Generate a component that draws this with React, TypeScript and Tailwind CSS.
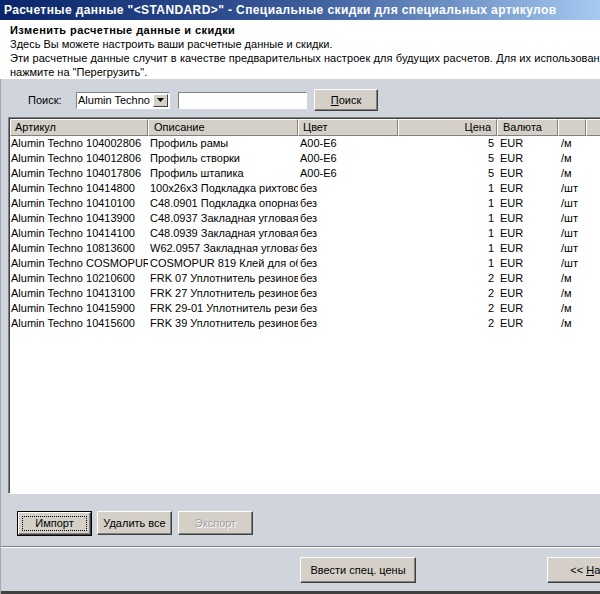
import React from 'react'

const rows = [
  ['Alumin Techno 104002806', 'Профиль рамы', 'A00-E6', '5', 'EUR', '/м'],
  ['Alumin Techno 104012806', 'Профиль створки', 'A00-E6', '5', 'EUR', '/м'],
  ['Alumin Techno 104017806', 'Профиль штапика', 'A00-E6', '5', 'EUR', '/м'],
  ['Alumin Techno 10414800', '100x26x3 Подкладка рихтовочная', 'без', '1', 'EUR', '/шт'],
  ['Alumin Techno 10410100', 'C48.0901 Подкладка опорная', 'без', '1', 'EUR', '/шт'],
  ['Alumin Techno 10413900', 'C48.0937 Закладная угловая', 'без', '1', 'EUR', '/шт'],
  ['Alumin Techno 10414100', 'C48.0939 Закладная угловая', 'без', '1', 'EUR', '/шт'],
  ['Alumin Techno 10813600', 'W62.0957 Закладная угловая', 'без', '1', 'EUR', '/шт'],
  ['Alumin Techno COSMOPUR 819', 'COSMOPUR 819 Клей для обжима', 'без', '1', 'EUR', '/шт'],
  ['Alumin Techno 10210600', 'FRK 07 Уплотнитель резиновый', 'без', '2', 'EUR', '/м'],
  ['Alumin Techno 10413100', 'FRK 27 Уплотнитель резиновый', 'без', '2', 'EUR', '/м'],
  ['Alumin Techno 10415900', 'FRK 29-01 Уплотнитель резиновый', 'без', '2', 'EUR', '/м'],
  ['Alumin Techno 10415600', 'FRK 39 Уплотнитель резиновый', 'без', '2', 'EUR', '/м'],
]

function Btn({
  children,
  className = '',
  focused = false,
  disabled = false,
}: {
  children: React.ReactNode
  className?: string
  focused?: boolean
  disabled?: boolean
}) {
  return (
    <div
      className={`shrink-0 bg-[#d4d0c8] ${
        focused ? 'border border-black' : ''
      } ${className}`}
    >
      <div className="w-full h-full border-t border-l border-white border-r border-b border-r-[#404040] border-b-[#404040] shadow-[inset_-1px_-1px_0_#808080] flex items-center justify-center">
        <div
          className={`flex items-center justify-center ${
            focused ? 'border border-dotted border-black w-[calc(100%-6px)] h-[calc(100%-6px)]' : ''
          } ${disabled ? 'text-[#a0a0a0] [text-shadow:1px_1px_0_#fff]' : 'text-black'}`}
        >
          {children}
        </div>
      </div>
    </div>
  )
}

const cols = [
  { w: 'w-[138px]', head: 'pl-[4px]', cell: 'pl-[1px]' },
  { w: 'w-[150px]', head: 'pl-[5px]', cell: 'pl-[2px]' },
  { w: 'w-[100px]', head: 'pl-[4px]', cell: 'pl-[2px]' },
  { w: 'w-[99px]', head: 'pr-[5px] justify-end', cell: 'pr-[3px] justify-end' },
  { w: 'w-[61px]', head: 'pl-[5px]', cell: 'pl-[3px]' },
  { w: 'w-[28px]', head: '', cell: 'pl-[3px]' },
  { w: 'w-[100px]', head: '', cell: '' },
]

const heads = ['Артикул', 'Описание', 'Цвет', 'Цена', 'Валюта', '', '']

export default function App() {
  return (
    <div className="w-[600px] h-[594px] overflow-hidden flex flex-col bg-[#d0d4dd] font-['Liberation_Sans',Arial,sans-serif] text-[11px] text-black">
      <div className="h-[20px] shrink-0 bg-gradient-to-r from-[#0a246a] via-[#3a5a9a] to-[#a6caf0] text-white font-bold text-[12px] tracking-[0.4px] leading-[20px] pl-[4px] whitespace-nowrap overflow-hidden">
        Расчетные данные "&lt;STANDARD&gt;" - Специальные скидки для специальных артикулов
      </div>

      <div className="h-[59px] shrink-0 bg-white pl-[10px] pt-[3px] leading-[14px] whitespace-nowrap overflow-hidden">
        <div className="font-bold tracking-[0.45px]">Изменить расчетные данные и скидки</div>
        <div>Здесь Вы можете настроить ваши расчетные данные и скидки.</div>
        <div className="tracking-[0.08px]">
          Эти расчетные данные случит в качестве предварительных настроек для будущих расчетов. Для их использования
        </div>
        <div>нажмите на "Перегрузить".</div>
      </div>

      <div className="flex-1 flex flex-col border-l border-[#a4a8b0] min-h-0">
        <div className="h-[22px] mt-[10px] flex items-center shrink-0">
          <div className="w-[48px] ml-[27px]">Поиск:</div>
          <div className="w-[94px] h-[17px] bg-white border-t border-l border-[#808080] border-r border-b border-r-white border-b-white flex items-center">
            <div className="flex-1 pl-[1px] whitespace-nowrap overflow-hidden">Alumin Techno</div>
            <div className="w-[15px] h-[13px] mr-[1px] bg-[#d4d0c8] border-t border-l border-white border-r border-b border-r-[#404040] border-b-[#404040] flex items-center justify-center">
              <svg width="7" height="4" viewBox="0 0 7 4">
                <path d="M0 0h7L3.5 4z" fill="#000" />
              </svg>
            </div>
          </div>
          <div className="w-[129px] h-[17px] ml-[8px] bg-white border-t border-l border-[#808080] border-r border-b border-r-white border-b-white" />
          <Btn className="w-[64px] h-[22px] ml-[7px]">
            <span>
              <span className="underline">П</span>оиск
            </span>
          </Btn>
        </div>

        <div className="ml-[7px] mt-[6px] h-[377px] shrink-0 border-t border-l border-[#808080] border-r-0 border-b border-b-white">
          <div className="h-full border-t border-l border-[#404040] bg-white overflow-hidden">
            <div className="flex h-[17px]">
              {heads.map((h, i) => (
                <div
                  key={i}
                  className={`${cols[i].w} shrink-0 h-full bg-[#d4d0c8] border-t border-l border-white border-r border-b border-r-[#808080] border-b-[#808080] flex items-center ${cols[i].head}`}
                >
                  {h}
                </div>
              ))}
            </div>
            {rows.map((r, ri) => (
              <div key={ri} className="flex h-[15px] leading-[15px]">
                {r.map((c, ci) => (
                  <div
                    key={ci}
                    className={`${cols[ci].w} shrink-0 flex whitespace-nowrap overflow-hidden ${cols[ci].cell}`}
                  >
                    {c}
                  </div>
                ))}
              </div>
            ))}
          </div>
        </div>

        <div className="flex mt-[17px] h-[25px] shrink-0">
          <Btn focused className="w-[75px] h-[25px] ml-[16px]">
            <span className="px-[10px]">Импорт</span>
          </Btn>
          <Btn className="w-[75px] h-[24px] ml-[5px]">Удалить все</Btn>
          <Btn disabled className="w-[75px] h-[24px] ml-[6px]">
            Экспорт
          </Btn>
        </div>

        <div className="mt-[10px] h-[2px] shrink-0 border-t border-[#808080] border-b border-b-white" />

        <div className="flex mt-[9px] h-[26px] shrink-0">
          <Btn className="w-[116px] h-[26px] ml-[299px]">Ввести спец. цены</Btn>
          <Btn className="w-[80px] h-[26px] ml-[131px] justify-start">
            <span className="pl-[14px] w-full">
              &lt;&lt; <span className="underline">Н</span>азад
            </span>
          </Btn>
        </div>

        <div className="mt-auto h-[3px] shrink-0 bg-[#404040]" />
      </div>
    </div>
  )
}
